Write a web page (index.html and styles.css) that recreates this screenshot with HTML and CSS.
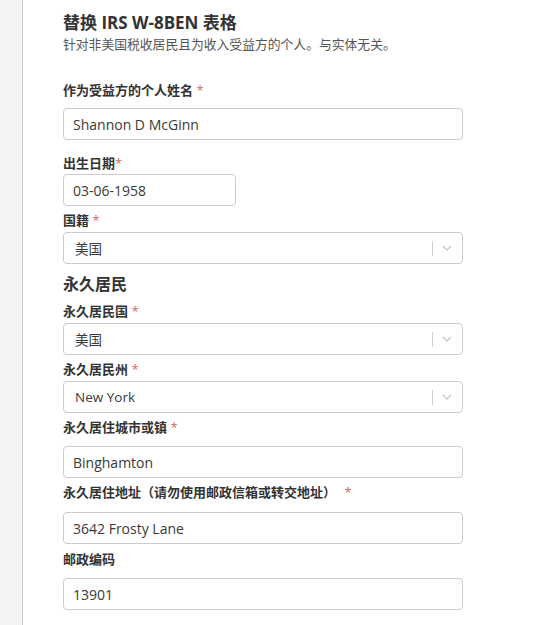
FILE: index.html
```html
<!DOCTYPE html>
<html lang="zh-CN">
<head>
<meta charset="utf-8">
<title>替换 IRS W-8BEN 表格</title>
<link rel="stylesheet" href="styles.css">
</head>
<body>
<div class="page">
  <aside class="side"></aside>
  <main class="main">
    <h1 class="title">替换 IRS W-8BEN 表格</h1>
    <p class="subtitle">针对非美国税收居民且为收入受益方的个人。与实体无关。</p>

    <div class="field f-name">
      <label class="label">作为受益方的个人姓名 <span class="req">*</span></label>
      <div class="input gap-9">Shannon D McGinn</div>
    </div>

    <div class="field f-dob">
      <label class="label">出生日期<span class="req">*</span></label>
      <div class="input short gap-2">03-06-1958</div>
    </div>

    <div class="field f-nat">
      <label class="label">国籍 <span class="req">*</span></label>
      <div class="select gap-3">
        <span class="select-value">美国</span>
        <span class="select-ind"><span class="sep"></span>
          <svg class="chev" width="20" height="20" viewBox="0 0 20 20"><path d="M6 8l4 4 4-4" fill="none" stroke="#c8c8c8" stroke-width="1.3"/></svg>
        </span>
      </div>
    </div>

    <h2 class="section">永久居民</h2>

    <div class="field f-country">
      <label class="label">永久居民国 <span class="req">*</span></label>
      <div class="select gap-3">
        <span class="select-value">美国</span>
        <span class="select-ind"><span class="sep"></span>
          <svg class="chev" width="20" height="20" viewBox="0 0 20 20"><path d="M6 8l4 4 4-4" fill="none" stroke="#c8c8c8" stroke-width="1.3"/></svg>
        </span>
      </div>
    </div>

    <div class="field f-state">
      <label class="label">永久居民州 <span class="req">*</span></label>
      <div class="select gap-3">
        <span class="select-value">New York</span>
        <span class="select-ind"><span class="sep"></span>
          <svg class="chev" width="20" height="20" viewBox="0 0 20 20"><path d="M6 8l4 4 4-4" fill="none" stroke="#c8c8c8" stroke-width="1.3"/></svg>
        </span>
      </div>
    </div>

    <div class="field f-city">
      <label class="label">永久居住城市或镇 <span class="req">*</span></label>
      <div class="input gap-10">Binghamton</div>
    </div>

    <div class="field f-addr">
      <label class="label">永久居住地址（请勿使用邮政信箱或转交地址） <span class="req req-wide">*</span></label>
      <div class="input gap-11">3642 Frosty Lane</div>
    </div>

    <div class="field f-zip">
      <label class="label">邮政编码</label>
      <div class="input gap-10">13901</div>
    </div>
  </main>
</div>
</body>
</html>
```

FILE: styles.css
```css
* { box-sizing: border-box; }
html, body { margin: 0; padding: 0; background: #fff; }
body {
  font-family: "Open Sans", "Noto Sans", "Noto Sans CJK SC", sans-serif;
  color: #333;
}
.page {
  display: flex;
  min-height: 625px;
}
.side {
  width: 23px;
  flex: none;
  background: #f4f4f4;
  border-right: 1px solid #cfcfcf;
}
.main {
  padding-left: 40px;
  width: 440px;
}
.title {
  margin: 11px 0 0;
  font-size: 17px;
  line-height: 24px;
  font-weight: 700;
  color: #333;
}
.subtitle {
  margin: 0;
  font-size: 12.8px;
  line-height: 18px;
  color: #555;
}
.label {
  display: block;
  font-size: 13px;
  line-height: 18px;
  font-weight: 700;
  color: #333;
}
.req {
  color: #d96565;
  font-weight: 400;
}
.req-wide { margin-left: 5px; }
.field { display: flex; flex-direction: column; }
.f-name { margin-top: 28px; }
.f-dob { margin-top: 14px; }
.f-nat { margin-top: 5px; }
.f-country { margin-top: 7px; }
.f-state { margin-top: 5px; }
.f-city { margin-top: 5px; }
.f-addr { margin-top: 5px; }
.f-zip { margin-top: 6px; }
.gap-2 { margin-top: 2px; }
.gap-3 { margin-top: 3px; }
.gap-9 { margin-top: 9px; }
.gap-10 { margin-top: 10px; }
.gap-11 { margin-top: 11px; }
.input, .select {
  width: 400px;
  height: 32px;
  border: 1px solid #ccc;
  border-radius: 4px;
  background: #fff;
  font-size: 14px;
  color: #3a3a3a;
  display: flex;
  align-items: center;
}
.input { padding-left: 9px; }
.input.short { width: 173px; }
.select { padding-left: 11px; justify-content: space-between; }
.select-value { font-size: 13.5px; }
.select-ind {
  display: flex;
  align-items: center;
  height: 100%;
  padding-right: 5px;
}
.sep {
  width: 1px;
  height: 15px;
  background: #d0d0d0;
  margin-right: 4px;
}
.chev { display: block; }
.section {
  margin: 9px 0 0;
  font-size: 16px;
  line-height: 22px;
  font-weight: 700;
  color: #333;
}
```
